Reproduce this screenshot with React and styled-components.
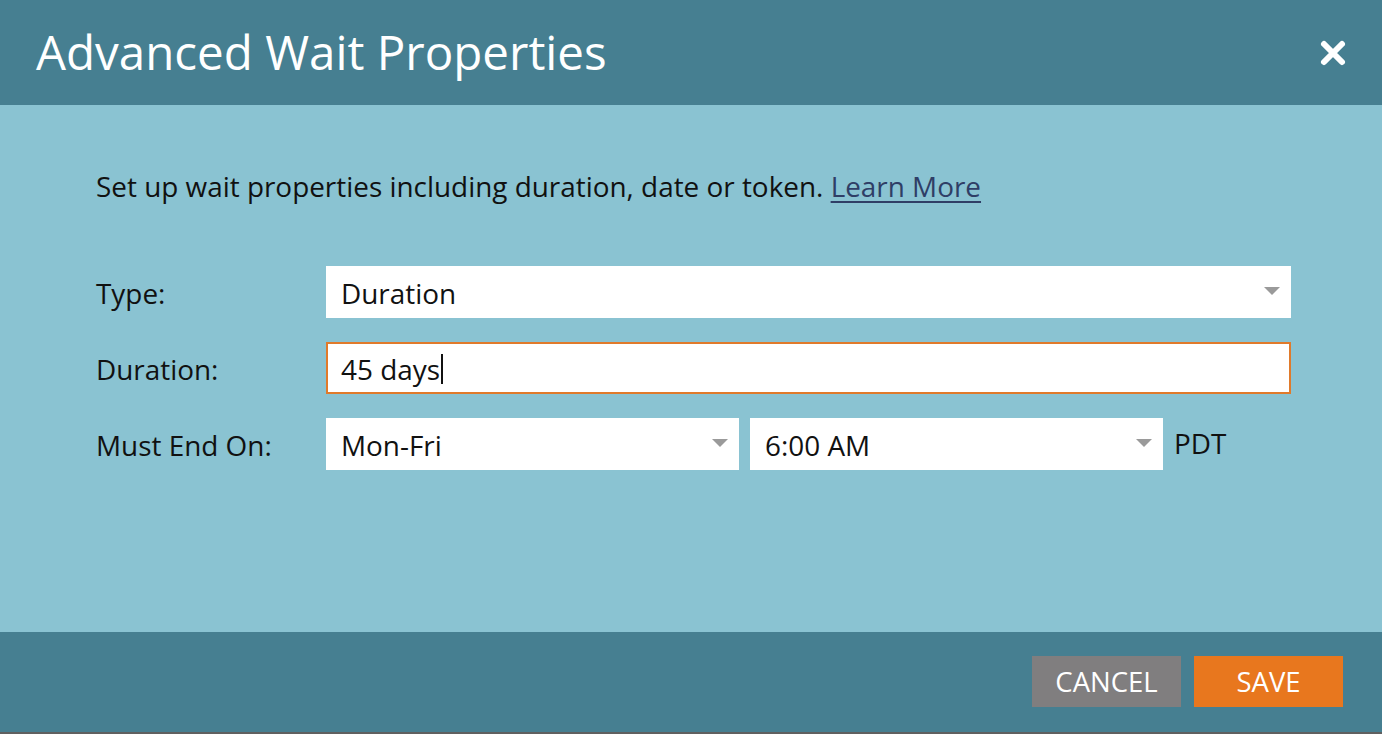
import React from "react";
import styled, { createGlobalStyle } from "styled-components";

const Global = createGlobalStyle`
  html, body { margin: 0; padding: 0; background: #606060; }
  body { font-family: "Open Sans", "Liberation Sans", sans-serif; }
  * { box-sizing: border-box; }
`;

const Dialog = styled.div`
  width: 1382px;
  height: 732px;
  display: flex;
  flex-direction: column;
  background: #8ac3d2;
`;

const Header = styled.header`
  height: 105px;
  background: #467f91;
  display: flex;
  align-items: center;
  justify-content: space-between;
  padding: 0 34px 0 36px;
`;

const Title = styled.h1`
  margin: 0;
  margin-top: -2px;
  color: #fff;
  font-size: 47.5px;
  font-weight: 400;
`;

const CloseButton = styled.button`
  background: none;
  border: none;
  padding: 0;
  width: 30px;
  height: 30px;
  display: flex;
  align-items: center;
  justify-content: center;
  cursor: pointer;
`;

const Body = styled.main`
  flex: 1;
  padding: 63px 90px 0 96px;
`;

const Intro = styled.p`
  margin: 0 0 62px;
  font-size: 27.9px;
  line-height: 36px;
  color: #111;
`;

const Link = styled.a`
  color: #2f3e66;
  text-decoration: underline;
  text-underline-offset: 4px;
  text-decoration-thickness: 2px;
`;

const Form = styled.div`
  display: grid;
  grid-template-columns: 230px 1fr;
  row-gap: 24px;
  align-items: center;
`;

const Label = styled.label`
  font-size: 27.9px;
  color: #111;
  margin-top: 2px;
`;

const FieldRow = styled.div`
  display: flex;
  align-items: center;
  gap: 11px;
`;

const Field = styled.div`
  position: relative;
  height: 52px;
  width: ${(p) => p.$width || "965px"};
  background: #fff;
  border: ${(p) => (p.$focused ? "2px solid #e07a2b" : "none")};
  display: flex;
  align-items: center;
  padding-left: ${(p) => (p.$focused ? "13px" : "15px")};
  padding-top: 2px;
  font-size: 27.9px;
  color: #111;
`;

const Arrow = styled.span`
  position: absolute;
  right: 11px;
  top: 21px;
  width: 0;
  height: 0;
  border-left: 8px solid transparent;
  border-right: 8px solid transparent;
  border-top: 8px solid #9a9a9a;
`;

const Caret = styled.span`
  display: inline-block;
  width: 2px;
  height: 30px;
  background: #111;
  margin-left: 1px;
`;

const Zone = styled.span`
  font-size: 27.9px;
  color: #111;
  margin-top: -2px;
`;

const Footer = styled.footer`
  height: 100px;
  background: #467f91;
  display: flex;
  justify-content: flex-end;
  align-items: flex-start;
  padding: 24px 39px 0 0;
  gap: 13px;
`;

const Button = styled.button`
  width: 149px;
  height: 51px;
  border: none;
  padding: 0;
  background: ${(p) => (p.$primary ? "#e8771e" : "#807e7f")};
  color: #fff;
  font-family: "Open Sans", "Liberation Sans", sans-serif;
  font-size: 27.5px;
  font-weight: 400;
  cursor: pointer;
`;

const BottomStrip = styled.div`
  height: 2px;
  background: #606060;
`;

function Select({ value, width }) {
  return (
    <Field $width={width}>
      {value}
      <Arrow />
    </Field>
  );
}

export default function App() {
  return (
    <>
      <Global />
      <Dialog>
        <Header>
          <Title>Advanced Wait Properties</Title>
          <CloseButton aria-label="Close">
            <svg width="28" height="28" viewBox="0 0 28 28">
              <path d="M5 5 L23 23 M23 5 L5 23" stroke="#fff" strokeWidth="6" strokeLinecap="round" />
            </svg>
          </CloseButton>
        </Header>
        <Body>
          <Intro>
            Set up wait properties including duration, date or token. <Link href="#">Learn More</Link>
          </Intro>
          <Form>
            <Label>Type:</Label>
            <Select value="Duration" />
            <Label>Duration:</Label>
            <Field $focused>
              45 days
              <Caret />
            </Field>
            <Label>Must End On:</Label>
            <FieldRow>
              <Select value="Mon-Fri" width="413px" />
              <Select value="6:00 AM" width="413px" />
              <Zone>PDT</Zone>
            </FieldRow>
          </Form>
        </Body>
        <Footer>
          <Button>CANCEL</Button>
          <Button $primary>SAVE</Button>
        </Footer>
      </Dialog>
      <BottomStrip />
    </>
  );
}
